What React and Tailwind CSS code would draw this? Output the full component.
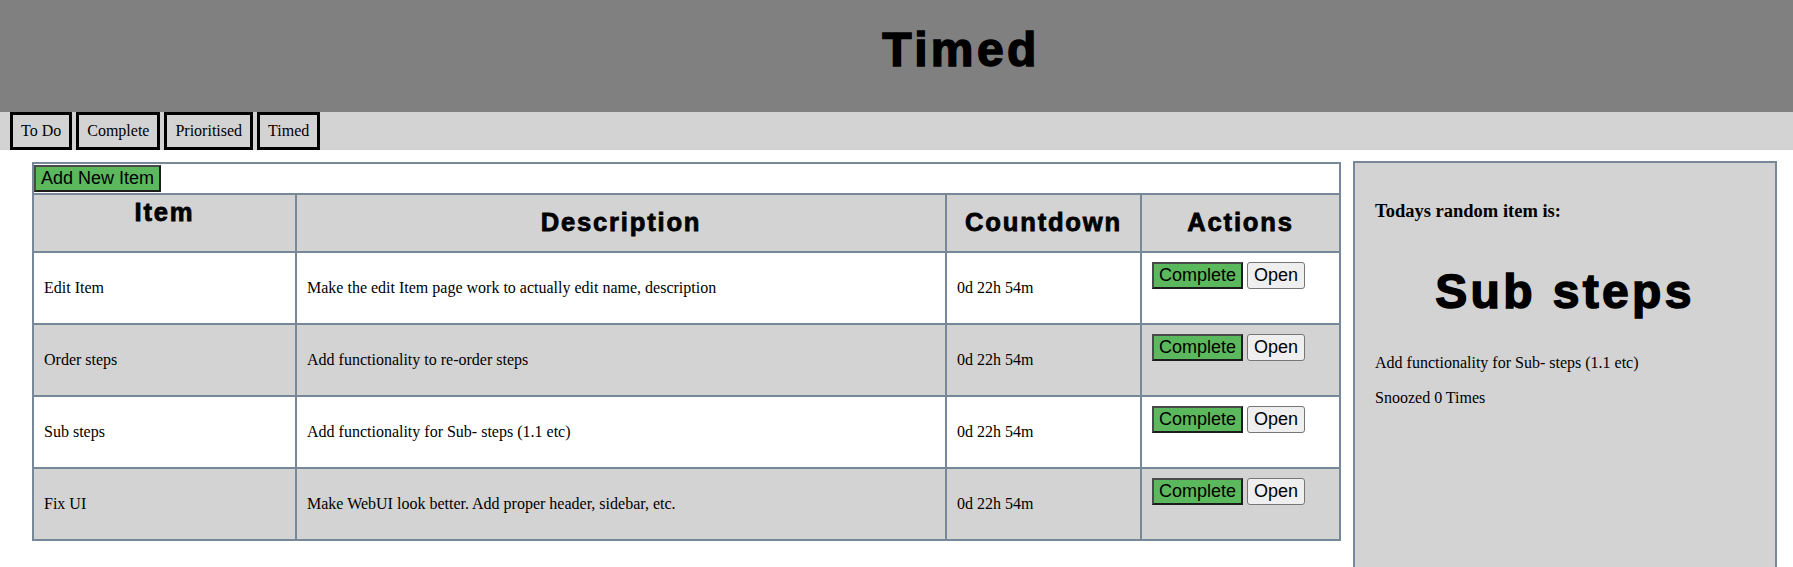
import React from "react";

// item rows shown in the Timed table
const items = [
  { name: "Edit Item", desc: "Make the edit Item page work to actually edit name, description", bg: "bg-white" },
  { name: "Order steps", desc: "Add functionality to re-order steps", bg: "bg-[#d3d3d3]" },
  { name: "Sub steps", desc: "Add functionality for Sub- steps (1.1 etc)", bg: "bg-white" },
  { name: "Fix UI", desc: "Make WebUI look better. Add proper header, sidebar, etc.", bg: "bg-[#d3d3d3]" },
];

const tabs = ["To Do", "Complete", "Prioritised", "Timed"];

const heavy =
  "font-['Liberation_Sans',Arial,sans-serif] font-bold leading-[1.15] tracking-[0.07em]";
const serif = "font-['Liberation_Serif','Times_New_Roman',serif]";
const cell = "border-2 border-[#778899]";

function GreenButton({ children }) {
  return (
    <button className="h-[27px] px-[5px] bg-[#5cb85c] text-black text-[18px] leading-[1.15] font-['Liberation_Sans',Arial,sans-serif] border-2 border-t-[#4a4a4a] border-l-[#4a4a4a] border-r-[#1c1c1c] border-b-[#1c1c1c]">
      {children}
    </button>
  );
}

export default function App() {
  return (
    <div className={`h-[567px] overflow-hidden bg-white text-black ${serif}`}>
      {/* header */}
      <div className="h-[112px] bg-[#808080] pl-[129px] pt-[22px]">
        <h1 className={`${heavy} text-[48px] text-center [-webkit-text-stroke:1.5px_black]`}>Timed</h1>
      </div>

      {/* tabs */}
      <div className="h-[38px] bg-[#d3d3d3] flex gap-[4px] pl-[10px]">
        {tabs.map((t) => (
          <button
            key={t}
            className={`h-[38px] px-[8px] border-[3px] border-black bg-[#d3d3d3] text-[16px] leading-[1.15] ${serif}`}
          >
            {t}
          </button>
        ))}
      </div>

      <div className="flex items-start gap-[12px] pl-[32px] pt-[12px]">
        <table className="w-[1307px] table-fixed border-collapse text-[16px] leading-[1.15]">
          <colgroup>
            <col className="w-[263px]" />
            <col className="w-[650px]" />
            <col className="w-[195px]" />
            <col className="w-[199px]" />
          </colgroup>
          <tbody>
            <tr className="h-[31px] bg-white">
              <td colSpan={4} className={`${cell} px-0 pt-[1px] pb-0 align-top`}>
                <GreenButton>Add New Item</GreenButton>
              </td>
            </tr>
            <tr className="h-[58px] bg-[#d3d3d3]">
              <th className={`${cell} ${heavy} text-[25.6px] align-top pt-[3px] [-webkit-text-stroke:0.8px_black]`}>Item</th>
              <th className={`${cell} ${heavy} text-[25.6px] align-middle [-webkit-text-stroke:0.8px_black]`}>Description</th>
              <th className={`${cell} ${heavy} text-[25.6px] align-middle [-webkit-text-stroke:0.8px_black]`}>Countdown</th>
              <th className={`${cell} ${heavy} text-[25.6px] align-middle [-webkit-text-stroke:0.8px_black]`}>Actions</th>
            </tr>
            {items.map((it) => (
              <tr key={it.name} className={`h-[72px] ${it.bg}`}>
                <td className={`${cell} px-[10px] align-middle`}>{it.name}</td>
                <td className={`${cell} px-[10px] align-middle`}>{it.desc}</td>
                <td className={`${cell} px-[10px] align-middle`}>0d 22h 54m</td>
                <td className={`${cell} px-[10px] pt-[9px] align-top`}>
                  <div className="flex gap-[4px]">
                    <GreenButton>Complete</GreenButton>
                    <button className="h-[27px] px-[6px] bg-[#efefef] border border-[#767676] rounded-[3px] text-[18px] leading-[1.15] font-['Liberation_Sans',Arial,sans-serif]">
                      Open
                    </button>
                  </div>
                </td>
              </tr>
            ))}
          </tbody>
        </table>

        {/* random item sidebar */}
        <div className="w-[424px] h-[420px] -mt-[1px] shrink-0 border-2 border-[#778899] bg-[#d3d3d3] px-[20px] pt-[20px]">
          <h3 className={`${serif} font-bold text-[18.5px] leading-[1.15] mt-[18px]`}>Todays random item is:</h3>
          <h1 className={`${heavy} text-[48px] text-center mt-[42px] [-webkit-text-stroke:1.5px_black]`}>Sub steps</h1>
          <p className="text-[16px] leading-[1.15] mt-[35px]">Add functionality for Sub- steps (1.1 etc)</p>
          <p className="text-[16px] leading-[1.15] mt-[16px]">Snoozed 0 Times</p>
        </div>
      </div>
    </div>
  );
}
